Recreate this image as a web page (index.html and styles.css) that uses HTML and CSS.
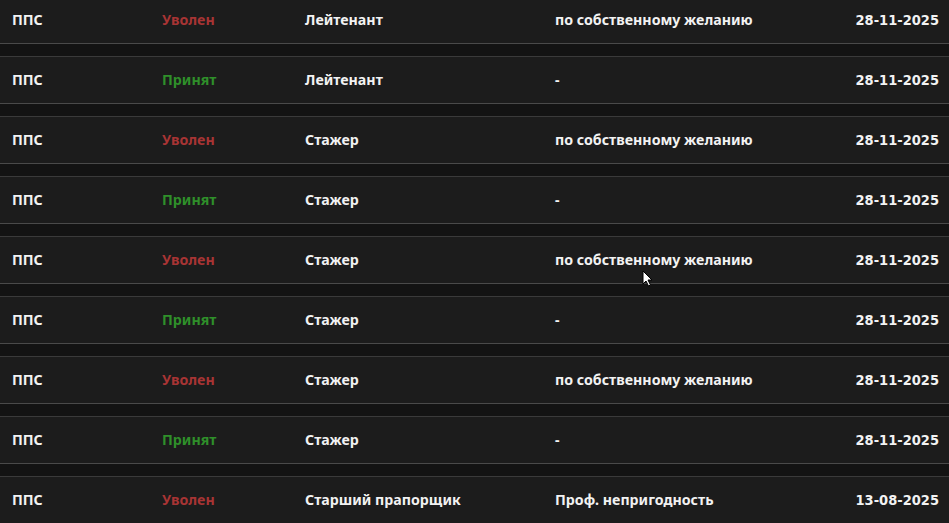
FILE: index.html
```html
<!DOCTYPE html>
<html lang="ru">
<head>
<meta charset="utf-8">
<link rel="stylesheet" href="styles.css">
</head>
<body>
<div class="list">
  <div class="row"><span class="c1">ППС</span><span class="c2 fired">Уволен</span><span class="c3">Лейтенант</span><span class="c4">по собственному желанию</span><span class="date">28-11-2025</span></div>
  <div class="row"><span class="c1">ППС</span><span class="c2 hired">Принят</span><span class="c3">Лейтенант</span><span class="c4">-</span><span class="date">28-11-2025</span></div>
  <div class="row"><span class="c1">ППС</span><span class="c2 fired">Уволен</span><span class="c3">Стажер</span><span class="c4">по собственному желанию</span><span class="date">28-11-2025</span></div>
  <div class="row"><span class="c1">ППС</span><span class="c2 hired">Принят</span><span class="c3">Стажер</span><span class="c4">-</span><span class="date">28-11-2025</span></div>
  <div class="row"><span class="c1">ППС</span><span class="c2 fired">Уволен</span><span class="c3">Стажер</span><span class="c4">по собственному желанию</span><span class="date">28-11-2025</span></div>
  <div class="row"><span class="c1">ППС</span><span class="c2 hired">Принят</span><span class="c3">Стажер</span><span class="c4">-</span><span class="date">28-11-2025</span></div>
  <div class="row"><span class="c1">ППС</span><span class="c2 fired">Уволен</span><span class="c3">Стажер</span><span class="c4">по собственному желанию</span><span class="date">28-11-2025</span></div>
  <div class="row"><span class="c1">ППС</span><span class="c2 hired">Принят</span><span class="c3">Стажер</span><span class="c4">-</span><span class="date">28-11-2025</span></div>
  <div class="row"><span class="c1">ППС</span><span class="c2 fired">Уволен</span><span class="c3">Старший прапорщик</span><span class="c4">Проф. непригодность</span><span class="date">13-08-2025</span></div>
</div>
<svg class="cursor" width="12" height="18" viewBox="0 0 12 18"><path d="M1 1 L1 14 L4 11 L6.5 16 L8.5 15 L6 10 L10 10 Z" fill="#fff" stroke="#000" stroke-width="1"/></svg>
</body>
</html>
```

FILE: styles.css
```css
html, body {
  margin: 0;
  padding: 0;
  background: #131313;
  overflow: hidden;
}
body {
  width: 949px;
  height: 523px;
  position: relative;
  font-family: "Noto Sans", "Open Sans", sans-serif;
  font-weight: 700;
  font-size: 14.2px;
  color: #f2f2f2;
}
.list {
  display: flex;
  flex-direction: column;
  gap: 12px;
  margin-top: -4px;
}
.row {
  height: 45px;
  display: grid;
  grid-template-columns: 150px 143px 250px 1fr auto;
  align-items: center;
  padding: 0 10px 1px 12px;
  background: #1c1c1c;
  border-top: 1px solid #3a3a3a;
  border-bottom: 1px solid #4a4a4a;
}
.fired { color: #a83434; }
.hired { color: #2f8f2a; }
.date {
  font-family: "DejaVu Sans Condensed", "DejaVu Sans", sans-serif;
  font-weight: 700;
  font-size: 14.5px;
}
.cursor {
  position: absolute;
  left: 642px;
  top: 270px;
}
```
